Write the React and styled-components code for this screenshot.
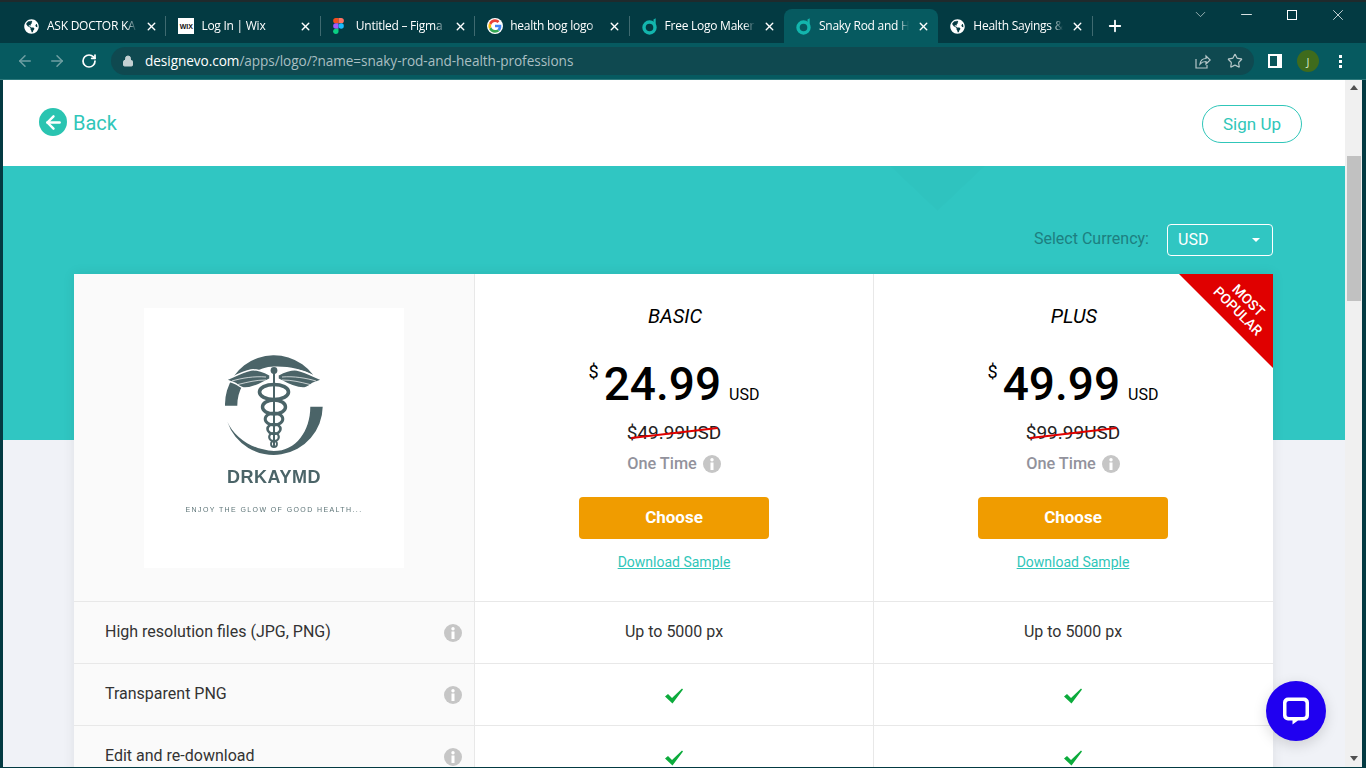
import React from 'react';
import styled, { createGlobalStyle } from 'styled-components';
import { ArrowLeft, ArrowRight, RotateCw, Lock, Star, X, Plus, ChevronDown, Minus } from 'lucide-react';
import { FaGlobeAmericas } from 'react-icons/fa';

const tabs = [
    { id: 1, title: 'ASK DOCTOR KA', icon: 'globe' },
    { id: 2, title: 'Log In | Wix', icon: 'wix' },
    { id: 3, title: 'Untitled – Figma', icon: 'figma' },
    { id: 4, title: 'health bog logo', icon: 'google' },
    { id: 5, title: 'Free Logo Maker', icon: 'evo', beforeActive: true },
    { id: 6, title: 'Snaky Rod and H', icon: 'evo', active: true },
    { id: 7, title: 'Health Sayings &', icon: 'globe' },
];

const plans = [
    { name: 'BASIC', price: '24.99', old: '$49.99USD' },
    { name: 'PLUS', price: '49.99', old: '$99.99USD', popular: true },
];

const features = [
    { label: 'High resolution files (JPG, PNG)', value: 'Up to 5000 px' },
    { label: 'Transparent PNG' },
    { label: 'Edit and re-download' },
];

function EvoIcon() {
    return (
        <svg width="16" height="18" viewBox="0 0 16 18">
            <circle cx="7.5" cy="10.5" r="5.5" fill="none" stroke="#13b5ad" strokeWidth="3.4" />
            <path d="M11.5 9V2.5l2.2-1.2V9z" fill="#13b5ad" />
        </svg>
    );
}

function FigmaIcon() {
    return (
        <svg width="11" height="16" viewBox="0 0 12 18">
            <path d="M3 0h3v6H3a3 3 0 0 1 0-6z" fill="#f24e1e" />
            <path d="M6 0h3a3 3 0 0 1 0 6H6z" fill="#ff7262" />
            <path d="M3 6h3v6H3a3 3 0 0 1 0-6z" fill="#a259ff" />
            <circle cx="9" cy="9" r="3" fill="#1abcfe" />
            <path d="M3 12h3v3a3 3 0 1 1-3-3z" fill="#0acf83" />
        </svg>
    );
}

function GoogleIcon() {
    return (
        <svg width="16" height="16" viewBox="0 0 48 48">
            <circle cx="24" cy="24" r="24" fill="#fff" />
            <path d="M43 24.5c0-1.4-.1-2.700-.4-4H24v7.600h10.800c-.5 2.500-1.900 4.600-4 6l6.300 4.900C40.800 35.600 43 30.500 43 24.500z" fill="#4285f4" />
            <path d="M24 44c5.400 0 9.900-1.800 13.100-4.900l-6.300-4.900c-1.800 1.200-4 1.900-6.800 1.900-5.200 0-9.600-3.500-11.200-8.200L6.300 32.800C9.600 39.400 16.300 44 24 44z" fill="#34a853" />
            <path d="M12.800 27.900c-.8-2.500-.8-5.300 0-7.800l-6.500-5c-2.800 5.600-2.800 12.200 0 17.800z" fill="#fbbc05" />
            <path d="M24 12c2.900 0 5.500 1 7.600 3l5.600-5.600C33.900 6.200 29.400 4 24 4 16.300 4 9.600 8.600 6.300 15.100l6.500 5C14.400 15.500 18.800 12 24 12z" fill="#ea4335" />
        </svg>
    );
}

function TabIcon({ kind }) {
    if (kind === 'globe') return <FaGlobeAmericas size={15} color="#fff" />;
    if (kind === 'wix') return <WixMark>WIX</WixMark>;
    if (kind === 'figma') return <FigmaIcon />;
    if (kind === 'google') return <GoogleIcon />;
    return <EvoIcon />;
}

function InfoIcon({ size = 18 }) {
    return (
        <svg width={size} height={size} viewBox="0 0 18 18">
            <circle cx="9" cy="9" r="9" fill="#c6c6c6" />
            <circle cx="9" cy="4.800" r="1.700" fill="#fff" />
            <rect x="7.500" y="7.500" width="3" height="7.500" fill="#fff" />
        </svg>
    );
}

function ShareIcon() {
    return (
        <svg width="16" height="16" viewBox="0 0 16 16" fill="none" stroke="#b5c6c8" strokeWidth="1.200">
            <path d="M1 6v9h11v-3" />
            <path d="M5 11c.5-3.500 3-5.500 6-5.500V3l4.200 4-4.200 4V8.500c-2.500 0-4.500 .8-6 2.500z" />
        </svg>
    );
}

function CaduceusLogo() {
    return (
        <svg width="100" height="100" viewBox="0 0 100 100" fill="#4b6468">
            <path d="M1 50.700A49 49 0 0 1 89.300 20C78 14 65 11 50 11.500C28 12 13.300 30 13.300 50.700z" />
            <path d="M98.700 51.700A49 49 0 0 1 3.300 66.700C10 82 28 95 50 96C72 96 86.300 76 86.300 51.700z" />
            <g fill="none" stroke="#4b6468">
                <path d="M50 17V92" strokeWidth="2" />
                <ellipse cx="50" cy="37" rx="14.500" ry="7.500" strokeWidth="3.600" />
                <ellipse cx="50" cy="52" rx="11.500" ry="7" strokeWidth="3.400" />
                <ellipse cx="50" cy="64" rx="8.800" ry="6" strokeWidth="3" />
                <ellipse cx="50" cy="74" rx="6.500" ry="5" strokeWidth="2.600" />
                <ellipse cx="50" cy="82" rx="4.800" ry="4" strokeWidth="2.200" />
                <ellipse cx="50" cy="89" rx="3" ry="3" strokeWidth="1.800" />
            </g>
            <circle cx="50" cy="15.500" r="3.400" />
            {[0, 1].map(side => (
                <g key={side} transform={side ? 'matrix(-1 0 0 1 100 0)' : undefined}>
                    <path d="M46 20C40 17 33 14 27 15C18 17 9 22 2 25C7 27 11 28 13 29.500C15 31 18 33 21 33C27 33 35 30 42 26L46 24z" stroke="#fff" strokeWidth="1.500" />
                    <path d="M42 22C30 21 18 23 8 26M42 25C32 25 24 27 14 29.500" fill="none" stroke="#fff" strokeWidth=".7" />
                </g>
            ))}
        </svg>
    );
}

export default function App() {
    return (
        <>
            <GlobalStyle />
            <Frame>
                <TabStrip>
                    {tabs.map(t => (
                        <Tab key={t.id} $active={t.active} $noDivider={t.active || t.beforeActive}>
                            <TabIconSlot><TabIcon kind={t.icon} /></TabIconSlot>
                            <TabTitle>{t.title}</TabTitle>
                            <X size={13} strokeWidth={2.6} color="#fff" />
                        </Tab>
                    ))}
                    <NewTab><Plus size={18} strokeWidth={2.4} color="#fff" /></NewTab>
                    <WindowControls>
                        <ChevronDown size={17} strokeWidth={1} color="#cfdcdc" />
                        <Minus size={17} strokeWidth={1.200} color="#fff" />
                        <MaximizeBox />
                        <X size={18} strokeWidth={1} color="#fff" />
                    </WindowControls>
                </TabStrip>

                <Toolbar>
                    <NavIcons>
                        <ArrowLeft size={18} color="#6f9fa2" />
                        <ArrowRight size={18} color="#6f9fa2" />
                        <RotateCw size={16} strokeWidth={2.600} color="#fff" />
                    </NavIcons>
                    <Omnibox>
                        <Lock size={12} fill="#c4d0d2" color="#c4d0d2" />
                        <Url><b>designevo.com</b>/apps/logo/?name=snaky-rod-and-health-professions</Url>
                        <OmniActions>
                            <ShareIcon />
                            <Star size={16} color="#b5c6c8" strokeWidth={1.800} />
                        </OmniActions>
                    </Omnibox>
                    <SidePanelIcon />
                    <Avatar>J</Avatar>
                    <MenuDots><i /><i /><i /></MenuDots>
                </Toolbar>

                <Viewport>
                    <Page>
                        <Header>
                            <BackLink>
                                <BackCircle><ArrowLeft size={21} strokeWidth={2.800} color="#fff" /></BackCircle>
                                <BackLabel>Back</BackLabel>
                            </BackLink>
                            <SignUp>Sign Up</SignUp>
                        </Header>

                        <Pricing>
                            <CurrencyRow>
                                <CurrencyLabel>Select Currency:</CurrencyLabel>
                                <CurrencySelect>USD<Caret /></CurrencySelect>
                            </CurrencyRow>

                            <Table>
                                <LogoCell>
                                    <LogoBox>
                                        <CaduceusLogo />
                                        <LogoName>DRKAYMD</LogoName>
                                        <LogoTagline>ENJOY THE GLOW OF GOOD HEALTH...</LogoTagline>
                                    </LogoBox>
                                </LogoCell>
                                {plans.map(p => (
                                    <PlanCell key={p.name} $popular={p.popular}>
                                        {p.popular && (
                                            <Ribbon><RibbonText>MOST<br />POPULAR</RibbonText></Ribbon>
                                        )}
                                        <PlanName>{p.name}</PlanName>
                                        <Price>
                                            <PriceSign>$</PriceSign>{p.price}<PriceUnit>USD</PriceUnit>
                                        </Price>
                                        <OldPrice>{p.old}<StrikeLine /></OldPrice>
                                        <Billing>One Time <InfoIcon /></Billing>
                                        <ChooseButton>Choose</ChooseButton>
                                        <SampleLink>Download Sample</SampleLink>
                                    </PlanCell>
                                ))}
                                {features.map(f => (
                                    <React.Fragment key={f.label}>
                                        <FeatureLabel>{f.label}<InfoIcon /></FeatureLabel>
                                        {plans.map(p => (
                                            <FeatureValue key={p.name} $popular={p.popular}>
                                                {f.value || (
                                                    <CheckMark viewBox="0 0 18 16">
                                                        <path d="M0 8.500L3 6l4 4L17 .5l1 1L7.500 15.500z" fill="#0cab3c" />
                                                    </CheckMark>
                                                )}
                                            </FeatureValue>
                                        ))}
                                    </React.Fragment>
                                ))}
                            </Table>
                        </Pricing>

                        <ChatButton>
                            <svg width="30" height="30" viewBox="0 0 30 30">
                                <path d="M7 1.500h16a5 5 0 0 1 5 5v13a5 5 0 0 1-5 5h-6l-5.500 4v-4H7a5 5 0 0 1-5-5v-13a5 5 0 0 1 5-5z" fill="#fff" />
                                <rect x="5.500" y="5" width="19" height="16" rx="2.500" fill="#2000f0" />
                            </svg>
                        </ChatButton>
                    </Page>

                    <Scrollbar>
                        <ScrollArrow />
                        <ScrollThumb />
                        <ScrollArrow $down />
                    </Scrollbar>
                </Viewport>
            </Frame>
        </>
    );
}

const GlobalStyle = createGlobalStyle`
  html, body { margin: 0; padding: 0; overflow: hidden; }
  * { box-sizing: border-box; }
  body { font-family: Roboto, "Liberation Sans", sans-serif; }
`;

const Frame = styled.div`
  width: 1366px;
  height: 768px;
  display: flex;
  flex-direction: column;
  overflow: hidden;
  background: #033a42;
`;

const TabStrip = styled.div`
  height: 43px;
  flex: none;
  display: flex;
  align-items: flex-end;
  padding-left: 12px;
  border-top: 2px solid #1f2a2c;
`;

const Tab = styled.div`
  width: 154.4px;
  height: 34px;
  flex: none;
  display: flex;
  align-items: center;
  padding-left: 12px;
  position: relative;
  border-radius: 8px 8px 0 0;
  background: ${p => (p.$active ? '#065a60' : 'transparent')};
  &::after {
    content: '';
    position: absolute;
    right: 0;
    top: 7px;
    height: 20px;
    width: 1px;
    background: ${p => (p.$noDivider ? 'transparent' : '#3f6a70')};
  }
`;

const TabIconSlot = styled.div`
  width: 23px;
  flex: none;
  display: flex;
  align-items: center;
`;

const TabTitle = styled.div`
  width: 90px;
  margin: 0 8px 2px 0;
  flex: none;
  overflow: hidden;
  white-space: nowrap;
  font: 12px "Open Sans", sans-serif;
  letter-spacing: -0.25px;
  color: #fff;
  -webkit-mask-image: linear-gradient(to right, #000 88%, transparent);
  mask-image: linear-gradient(to right, #000 88%, transparent);
`;

const WixMark = styled.div`
  width: 16px;
  height: 16px;
  background: #fff;
  color: #111;
  font: 800 7px "Liberation Sans", sans-serif;
  display: flex;
  align-items: center;
  justify-content: center;
`;

const NewTab = styled.div`
  width: 44px;
  height: 34px;
  display: flex;
  align-items: center;
  justify-content: center;
`;

const WindowControls = styled.div`
  margin-left: auto;
  align-self: flex-start;
  width: 184px;
  height: 25px;
  display: grid;
  grid-template-columns: repeat(4, 46px);
  justify-items: center;
  align-items: center;
  margin-right: 5px;
`;

const MaximizeBox = styled.div`
  width: 10px;
  height: 10px;
  border: 1px solid #fff;
`;

const Toolbar = styled.div`
  height: 37px;
  flex: none;
  display: flex;
  align-items: center;
  background: #065a60;
  border-bottom: 1px solid #2f7a7d;
  padding: 0 17px 0 9px;
`;

const NavIcons = styled.div`
  width: 102px;
  flex: none;
  display: grid;
  grid-template-columns: 32px 32px 31px;
  justify-items: center;
  align-items: center;
`;

const Omnibox = styled.div`
  width: 1143px;
  height: 28px;
  flex: none;
  display: flex;
  align-items: center;
  padding: 0 11px 0 11px;
  border-radius: 14px;
  background: #0f4950;
`;

const Url = styled.div`
  margin: 0 0 1px 11px;
  font: 13.6px "Open Sans", sans-serif;
  letter-spacing: -0.05px;
  color: #a9bfc2;
  b { font-weight: 400; color: #fff; }
`;

const OmniActions = styled.div`
  margin-left: auto;
  display: flex;
  align-items: center;
  gap: 16px;
`;

const SidePanelIcon = styled.div`
  width: 14px;
  height: 14px;
  flex: none;
  margin-left: 14px;
  background: #0b555b;
  border: solid #fff;
  border-width: 2px 5px 2px 2px;
`;

const Avatar = styled.div`
  width: 22px;
  height: 22px;
  flex: none;
  margin-left: 15px;
  border-radius: 50%;
  background: #3f6b1c;
  color: #d4e4c4;
  font: 11px "Open Sans", sans-serif;
  display: flex;
  align-items: center;
  justify-content: center;
`;

const MenuDots = styled.div`
  margin-left: 20px;
  display: flex;
  flex-direction: column;
  gap: 2px;
  i { display: block; width: 3px; height: 3px; background: #fff; }
`;

const Viewport = styled.div`
  flex: 1;
  min-height: 0;
  display: flex;
  padding: 0 4px 1px 3px;
`;

const Page = styled.div`
  flex: 1;
  min-width: 0;
  overflow: hidden;
  position: relative;
  background: #f0f2f7;
`;

const Header = styled.div`
  height: 86px;
  background: #fff;
  display: flex;
  align-items: center;
  justify-content: space-between;
  padding: 0 43px 0 36px;
`;

const BackLink = styled.div`
  display: flex;
  align-items: center;
  gap: 6px;
  font-size: 20px;
  color: #30c6b9;
  margin-bottom: 2px;
`;

const BackLabel = styled.span`
  padding-top: 2px;
`;

const BackCircle = styled.div`
  width: 28px;
  height: 28px;
  border-radius: 50%;
  background: #2ac4b1;
  display: flex;
  align-items: center;
  justify-content: center;
`;

const SignUp = styled.div`
  width: 100px;
  height: 38px;
  border: 1px solid #30c6b9;
  border-radius: 19px;
  display: flex;
  align-items: center;
  justify-content: center;
  font-size: 17px;
  color: #30c6b9;
  margin-top: 2px;
`;

const Pricing = styled.div`
  position: relative;
  padding: 0 72px 0 71px;
  background: linear-gradient(#30c6c2 274px, #f0f2f7 274px);
  &::before {
    content: '';
    position: absolute;
    left: 887px;
    top: 0;
    width: 95px;
    height: 45px;
    clip-path: polygon(0 0, 100% 0, 50% 100%);
    background: rgba(0, 0, 0, 0.01);
  }
`;

const CurrencyRow = styled.div`
  height: 108px;
  padding-top: 58px;
  display: flex;
  justify-content: flex-end;
  align-items: flex-start;
  gap: 18px;
  position: relative;
`;

const CurrencyLabel = styled.div`
  height: 32px;
  line-height: 29px;
  font-size: 16px;
  color: #1d7f80;
`;

const CurrencySelect = styled.div`
  width: 106px;
  height: 32px;
  border: 1px solid #fff;
  border-radius: 4px;
  padding: 0 12px 2px 10px;
  display: flex;
  align-items: center;
  justify-content: space-between;
  font-size: 16px;
  color: #fff;
`;

const Caret = styled.span`
  width: 0;
  height: 0;
  margin-top: 2px;
  border: 4px solid transparent;
  border-top-color: #fff;
  border-bottom: 0;
`;

const Table = styled.div`
  position: relative;
  display: grid;
  grid-template-columns: 400px 399px 400px;
  background: #fff;
  box-shadow: 0 0 12px rgba(0, 0, 0, 0.08);
`;

const LogoCell = styled.div`
  height: 328px;
  padding: 34px 0 0 70px;
  background: #fafafa;
  border-bottom: 1px solid #e8e8e8;
`;

const LogoBox = styled.div`
  width: 260px;
  height: 260px;
  background: #fff;
  padding-top: 47px;
  display: flex;
  flex-direction: column;
  align-items: center;
  filter: blur(0.3px);
`;

const LogoName = styled.div`
  margin-top: 11px;
  font: bold 18px/22px "Liberation Sans", sans-serif;
  letter-spacing: 0.5px;
  color: #4b6468;
`;

const LogoTagline = styled.div`
  margin-top: 17px;
  font: 7px/10px "Liberation Sans", sans-serif;
  letter-spacing: 1.4px;
  color: #5e7578;
`;

const PlanCell = styled.div`
  position: relative;
  height: 328px;
  padding: 30px ${p => (p.$popular ? '1px' : '0')} 0 0;
  display: flex;
  flex-direction: column;
  align-items: center;
  border-left: 1px solid #e8e8e8;
  border-bottom: 1px solid #e8e8e8;
`;

const Ribbon = styled.div`
  position: absolute;
  right: 0;
  top: 0;
  width: 94px;
  height: 94px;
  background: #e00000;
  clip-path: polygon(0 0, 100% 0, 100% 100%);
`;

const RibbonText = styled.div`
  position: absolute;
  left: 29px;
  top: 17px;
  width: 70px;
  transform: rotate(45deg);
  text-align: center;
  font-size: 14px;
  font-weight: 500;
  line-height: 15px;
  color: #fff;
`;

const PlanName = styled.div`
  font-size: 20px;
  font-style: italic;
  line-height: 24px;
  color: #000;
  padding-left: 2px;
`;

const Price = styled.div`
  margin-top: 33px;
  height: 46px;
  font-size: 46px;
  font-weight: 500;
  line-height: 46px;
  white-space: nowrap;
  color: #000;
`;

const PriceSign = styled.span`
  font-size: 18px;
  font-weight: 400;
  line-height: 0;
  vertical-align: 22px;
  margin-right: 5px;
`;

const PriceUnit = styled.span`
  font-size: 16px;
  font-weight: 400;
  line-height: 0;
  margin-left: 8px;
`;

const OldPrice = styled.div`
  position: relative;
  margin-top: 14px;
  font-size: 19px;
  line-height: 24px;
  color: #222;
`;

const StrikeLine = styled.span`
  position: absolute;
  left: 4px;
  top: 11px;
  width: 87px;
  height: 2px;
  background: #e00000;
  transform: rotate(-6.5deg);
`;

const Billing = styled.div`
  margin-top: 7px;
  display: flex;
  align-items: center;
  gap: 6px;
  font-size: 16.3px;
  font-weight: 500;
  line-height: 24px;
  color: #92929c;
`;

const ChooseButton = styled.div`
  margin-top: 21px;
  width: 190px;
  height: 42px;
  padding-bottom: 2px;
  border-radius: 4px;
  background: #f09c00;
  display: flex;
  align-items: center;
  justify-content: center;
  font-size: 17px;
  font-weight: 700;
  color: #fff;
`;

const SampleLink = styled.div`
  margin-top: 13px;
  font-size: 14px;
  line-height: 20px;
  color: #30c6b9;
  text-decoration: underline;
`;

const FeatureLabel = styled.div`
  height: 62px;
  padding: 0 12px 2px 31px;
  display: flex;
  align-items: center;
  justify-content: space-between;
  background: #fafafa;
  border-bottom: 1px solid #e8e8e8;
  font-size: 16px;
  color: #333;
  svg { margin-top: 2px; }
`;

const FeatureValue = styled.div`
  height: 62px;
  padding: 0 ${p => (p.$popular ? '1px' : '0')} 2px 0;
  display: flex;
  align-items: center;
  justify-content: center;
  border-left: 1px solid #e8e8e8;
  border-bottom: 1px solid #e8e8e8;
  font-size: 16px;
  color: #333;
`;

const CheckMark = styled.svg`
  width: 18px;
  height: 16px;
  margin-top: 4px;
`;

const ChatButton = styled.div`
  position: absolute;
  right: 19px;
  bottom: 26px;
  width: 60px;
  height: 60px;
  border-radius: 50%;
  background: #2000f0;
  box-shadow: 0 4px 14px rgba(0, 0, 0, 0.15);
  display: flex;
  align-items: center;
  justify-content: center;
`;

const Scrollbar = styled.div`
  width: 17px;
  flex: none;
  display: flex;
  flex-direction: column;
  align-items: center;
  background: #f0f0f0;
`;

const ScrollArrow = styled.div`
  flex: none;
  margin-top: ${p => (p.$down ? 'auto' : '5px')};
  width: 0;
  border: 4px solid transparent;
  ${p => (p.$down
        ? 'border-top: 5px solid #505050; border-bottom: 0; height: 0; margin-bottom: 6px;'
        : 'border-bottom: 5px solid #505050; border-top: 0; height: 0;')}
`;

const ScrollThumb = styled.div`
  width: 14px;
  height: 145px;
  margin-top: 66px;
  background: #c1c1c1;
`;
